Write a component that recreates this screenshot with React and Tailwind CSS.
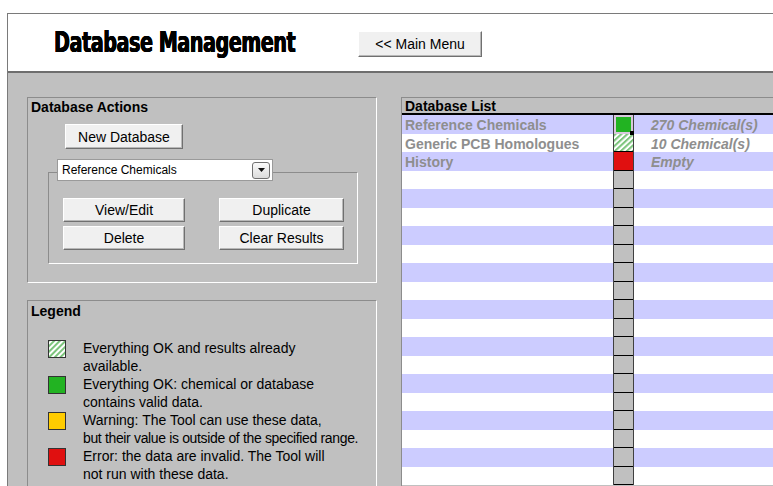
import React from "react";

const btn =
  "flex items-center justify-center bg-[#f0f0f0] border border-t-white border-l-white border-r-[#707070] border-b-[#707070] shadow-[inset_-1px_-1px_0_#b8b8b8] text-[14px] text-black leading-none";

function Hatch({ className = "" }) {
  return (
    <svg className={className} viewBox="0 0 18 18" width="18" height="18">
      <defs>
        <pattern id="hatch" width="4" height="4" patternUnits="userSpaceOnUse" patternTransform="rotate(45)">
          <rect width="4" height="4" fill="#ffffff" />
          <rect width="2" height="4" fill="#7cc47c" />
        </pattern>
      </defs>
      <rect x="0.5" y="0.5" width="17" height="17" fill="url(#hatch)" stroke="#333" />
    </svg>
  );
}

function Swatch({ color }) {
  return <div className="w-[18px] h-[18px] border border-[#333]" style={{ background: color }} />;
}

const legend = [
  { kind: "hatch", lines: ["Everything OK and results already", "available."] },
  { kind: "#22b322", lines: ["Everything OK: chemical or database", "contains valid data."] },
  { kind: "#ffcc00", lines: ["Warning: The Tool can use these data,", "but their value is outside of the specified range."] },
  { kind: "#e01010", lines: ["Error: the data are invalid. The Tool will", "not run with these data."] },
];

const dbRows = [
  { name: "Reference Chemicals", status: "green", info: "270 Chemical(s)" },
  { name: "Generic PCB Homologues", status: "hatch", info: "10 Chemical(s)" },
  { name: "History", status: "red", info: "Empty" },
];

function StatusCell({ status }) {
  if (status === "green") {
    return (
      <div className="relative h-full w-full border-2 border-[#d8c8dc] bg-[#22b322]">
        <div className="absolute -right-[3px] -bottom-[3px] w-[4px] h-[4px] bg-black" />
      </div>
    );
  }
  if (status === "hatch") {
    return (
      <div className="h-full w-full border-b border-black overflow-hidden">
        <svg viewBox="0 0 18 18" preserveAspectRatio="none" className="w-full h-full">
          <defs>
            <pattern id="hatch2" width="4" height="4" patternUnits="userSpaceOnUse" patternTransform="rotate(45)">
              <rect width="4" height="4" fill="#ffffff" />
              <rect width="2" height="4" fill="#7cc47c" />
            </pattern>
          </defs>
          <rect width="18" height="18" fill="url(#hatch2)" />
        </svg>
      </div>
    );
  }
  if (status === "red") {
    return <div className="h-full w-full border-b border-black bg-[#e01010]" />;
  }
  return <div className="h-full w-full border-b border-black bg-[#c0c0c0]" />;
}

export default function App() {
  const rows = Array.from({ length: 20 }, (_, i) => dbRows[i] || { name: "", status: "empty", info: "" });

  return (
    <div className="w-[773px] h-[486px] overflow-hidden bg-white pt-[13px] font-['Liberation_Sans',Arial,sans-serif]">
      <div className="ml-[7px] h-[473px] border-l border-t border-[#7a7a7a] flex flex-col">
        {/* header */}
        <div className="h-[59px] shrink-0 bg-white border-b-2 border-[#6e6e6e] flex items-center pl-[46px]">
          <div className="w-[304px] h-[30px] flex items-center">
            <span className="inline-block origin-left scale-x-[0.73] font-['DejaVu_Sans_Condensed',sans-serif] font-bold text-[29px] leading-none tracking-[-0.5px] text-black whitespace-nowrap [text-shadow:0.7px_0_0_#000,-0.3px_0_0_#000,0_0.4px_0_#000]">
              Database Management
            </span>
          </div>
          <button className={`${btn} w-[124px] h-[26px] mt-[3px]`}>&lt;&lt; Main Menu</button>
        </div>

        {/* body */}
        <div className="flex-1 bg-[#c0c0c0] flex pl-[19px] pt-[24px] gap-[24px] overflow-hidden">
          {/* left column */}
          <div className="w-[350px] shrink-0 flex flex-col gap-[17px]">
            <div className="h-[186px] border border-t-[#8c8c8c] border-l-[#8c8c8c] border-r-white border-b-white">
              <div className="pl-[3px] text-[14px] font-bold leading-[16px] pt-[1px]">Database Actions</div>
              <button className={`${btn} ml-[37px] mt-[9px] w-[118px] h-[25px]`}>New Database</button>
              <div className="ml-[29px] mt-[10px] relative z-10 w-[216px] h-[22px] bg-white border border-[#9a9a9a] flex items-center pl-[4px] pr-[2px]">
                <span className="flex-1 text-[12px] leading-none text-black">Reference Chemicals</span>
                <div className="w-[18px] h-[17px] rounded-[3px] border border-[#707070] bg-gradient-to-b from-[#fafafa] to-[#dcdcdc] flex items-center justify-center">
                  <svg width="7" height="4" viewBox="0 0 7 4">
                    <path d="M0 0 L7 0 L3.5 4 Z" fill="#111" />
                  </svg>
                </div>
              </div>
              <div className="ml-[20px] -mt-[9px] w-[310px] h-[92px] border border-t-[#8c8c8c] border-l-[#8c8c8c] border-r-white border-b-white pl-[14px] pt-[25px]">
                <div className="grid grid-cols-[122px_125px] gap-x-[34px] gap-y-[4px]">
                  <button className={`${btn} h-[24px]`}>View/Edit</button>
                  <button className={`${btn} h-[24px]`}>Duplicate</button>
                  <button className={`${btn} h-[24px]`}>Delete</button>
                  <button className={`${btn} h-[24px]`}>Clear Results</button>
                </div>
              </div>
            </div>

            <div className="flex-1 border-t border-l border-[#8c8c8c] border-r border-r-white">
              <div className="pl-[3px] pt-[2px] text-[14px] font-bold leading-[16px]">Legend</div>
              <div className="mt-[20px] flex flex-col">
                {legend.map((it, i) => (
                  <div key={i} className="flex">
                    <div className="w-[55px] pl-[20px] pt-[1px] shrink-0">
                      {it.kind === "hatch" ? <Hatch /> : <Swatch color={it.kind} />}
                    </div>
                    <div className="text-[14px] leading-[18px] text-black whitespace-nowrap">
                      {it.lines.map((l, j) => (
                        <div key={j} className={l.length > 45 ? "tracking-[-0.35px]" : ""}>
                          {l}
                        </div>
                      ))}
                    </div>
                  </div>
                ))}
              </div>
            </div>
          </div>

          {/* database list */}
          <div className="flex-1 border-t border-l border-[#8c8c8c] flex flex-col">
            <div className="h-[17px] pl-[3px] text-[14px] font-bold leading-[17px] border-b-2 border-black">Database List</div>
            <div className="flex flex-col">
              {rows.map((r, i) => (
                <div key={i} className={`h-[18.5px] flex ${i % 2 === 0 ? "bg-[#ccccff]" : "bg-white"}`}>
                  <div className="w-[211px] pl-[3px] pt-[1px] text-[14px] font-bold text-[#8e8e8e] leading-[18px] whitespace-nowrap">{r.name}</div>
                  <div className="w-[21px] h-full border-l border-r border-[#404040] bg-[#c0c0c0]">
                    <StatusCell status={r.status} />
                  </div>
                  <div className="flex-1 pl-[17px] pt-[1px] text-[14px] font-bold italic text-[#8e8e8e] leading-[18px] whitespace-nowrap">{r.info}</div>
                </div>
              ))}
            </div>
          </div>
        </div>
      </div>
    </div>
  );
}
